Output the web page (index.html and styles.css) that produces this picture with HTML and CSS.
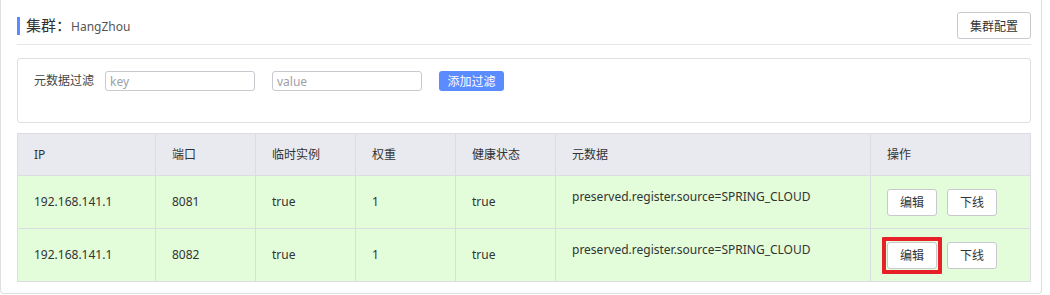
FILE: index.html
```html
<!DOCTYPE html>
<html lang="zh-CN">
<head>
    <meta charset="UTF-8">
    <title>集群 HangZhou</title>
    <link rel="stylesheet" href="styles.css">
</head>
<body>
<div class="cluster">
    <div class="cluster-head">
        <div class="cluster-title">集群：<span class="cluster-name">HangZhou</span></div>
        <button class="btn">集群配置</button>
    </div>

    <div class="filter">
        <span class="filter-label">元数据过滤</span>
        <input class="filter-input" type="text" placeholder="key">
        <input class="filter-input" type="text" placeholder="value">
        <button class="btn-primary">添加过滤</button>
    </div>

    <table class="instances">
        <thead>
        <tr>
            <th class="col-ip">IP</th>
            <th class="col-narrow">端口</th>
            <th class="col-narrow">临时实例</th>
            <th class="col-narrow">权重</th>
            <th class="col-narrow">健康状态</th>
            <th class="col-meta">元数据</th>
            <th>操作</th>
        </tr>
        </thead>
        <tbody>
        <tr>
            <td>192.168.141.1</td>
            <td>8081</td>
            <td>true</td>
            <td>1</td>
            <td>true</td>
            <td class="meta">preserved.register.source=SPRING_CLOUD</td>
            <td class="ops"><button class="btn">编辑</button><button class="btn">下线</button></td>
        </tr>
        <tr class="last">
            <td>192.168.141.1</td>
            <td>8082</td>
            <td>true</td>
            <td>1</td>
            <td>true</td>
            <td class="meta">preserved.register.source=SPRING_CLOUD</td>
            <td class="ops"><span class="marked"><button class="btn">编辑</button></span><button class="btn">下线</button></td>
        </tr>
        </tbody>
    </table>
</div>
</body>
</html>
```

FILE: styles.css
```css
body {
    margin: 0;
    background: #fff;
    color: #333;
    font: 12px/18px "Noto Sans", "Noto Sans CJK SC", sans-serif;
}

.cluster {
    width: 1014px;
    border: 1px solid #dfdfe3;
    border-top: none;
    border-radius: 0 0 4px 4px;
    padding: 0 10px 11px 16px;
}

.cluster-head {
    display: flex;
    align-items: center;
    justify-content: space-between;
    padding: 12px 0 5px;
    border-bottom: 1px solid #e6e6e8;
}

.cluster-title {
    border-left: 3px solid #5a8cff;
    padding-left: 6px;
    font-size: 15px;
    line-height: 16px;
    color: #333;
}

.cluster-name {
    font-size: 12px;
    color: #555;
}

.btn {
    width: 50px;
    height: 27px;
    padding: 0;
    background: #fff;
    border: 1px solid #c8c9ce;
    border-radius: 3px;
    color: #333;
    font: 12px "Noto Sans", "Noto Sans CJK SC", sans-serif;
    vertical-align: middle;
    cursor: pointer;
}

.cluster-head .btn {
    width: 74px;
}

.filter {
    display: flex;
    align-items: flex-start;
    gap: 17px;
    height: 51px;
    margin-top: 13px;
    padding: 12px 0 0 16px;
    border: 1px solid #dfdfe3;
    border-radius: 3px;
}

.filter-label {
    line-height: 20px;
    margin-right: -6px;
    color: #444;
}

.filter-input {
    box-sizing: border-box;
    width: 150px;
    height: 20px;
    margin: 0;
    padding: 0 4px;
    border: 1px solid #c8c9ce;
    border-radius: 3px;
    font: 12px "Noto Sans", "Noto Sans CJK SC", sans-serif;
    color: #333;
}

.filter-input::placeholder {
    color: #a0a0a6;
}

.btn-primary {
    width: 65px;
    height: 20px;
    padding: 0;
    background: #5a8cff;
    border: none;
    border-radius: 3px;
    color: #fff;
    font: 12px "Noto Sans", "Noto Sans CJK SC", sans-serif;
}

.instances {
    width: 1014px;
    margin-top: 10px;
    border-collapse: collapse;
    border: 1px solid #dcdce2;
}

.instances th,
.instances td {
    border: 1px solid #dcdce2;
    padding: 0 16px;
    text-align: left;
    font-weight: normal;
}

.instances th {
    height: 41px;
    background: #e9eaef;
}

.instances td {
    height: 52px;
    background: #e3fcd9;
}

.col-ip {
    width: 105px;
}

.col-narrow {
    width: 67px;
}

.col-meta {
    width: 282px;
}

.instances td.meta {
    vertical-align: top;
    padding-top: 12px;
    height: 40px;
}

.ops .btn + .btn {
    margin-left: 10px;
}

.marked {
    position: relative;
    display: inline-block;
    vertical-align: middle;
}

.marked::after {
    content: "";
    position: absolute;
    top: -5px;
    left: -5px;
    right: -5px;
    bottom: -5px;
    border: 4px solid #e8202a;
    border-radius: 1px;
}

.marked + .btn {
    margin-left: 10px;
}
```
